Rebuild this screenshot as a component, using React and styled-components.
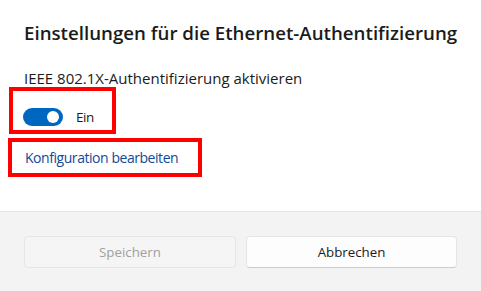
import React from 'react';
import styled, { createGlobalStyle } from 'styled-components';

const Global = createGlobalStyle`
  html, body { margin: 0; padding: 0; background: #ffffff; }
  body {
    font-family: "Open Sans", "Noto Sans", "DejaVu Sans", sans-serif;
    color: #1b1b1b;
    -webkit-font-smoothing: antialiased;
  }
`;

const Dialog = styled.div`
  width: 481px;
  height: 291px;
  display: flex;
  flex-direction: column;
  background: #ffffff;
  overflow: hidden;
`;

const Body = styled.div`
  flex: 1;
  display: flex;
  flex-direction: column;
  align-items: flex-start;
  padding: 19px 24px 0;
`;

const Title = styled.h1`
  margin: 0;
  font-size: 18.7px;
  font-weight: 600;
  line-height: 28px;
  color: #1b1b1b;
  white-space: nowrap;
`;

const Label = styled.div`
  margin-top: 21px;
  font-size: 15px;
  line-height: 20px;
  color: #1b1b1b;
  white-space: nowrap;
`;

const Highlight = styled.div`
  box-sizing: border-box;
  display: flex;
  align-items: center;
  border: 4px solid #ff0000;
  width: ${(p) => p.$w}px;
  height: ${(p) => p.$h}px;
  margin-left: ${(p) => p.$ml}px;
  margin-top: ${(p) => p.$mt}px;
  padding: ${(p) => p.$pad};
`;

const ToggleTrack = styled.div`
  position: relative;
  width: 40px;
  height: 18px;
  border-radius: 9px;
  background: #0067c0;
  flex: none;
`;

const ToggleKnob = styled.div`
  position: absolute;
  top: 3px;
  right: 4px;
  width: 12px;
  height: 12px;
  border-radius: 50%;
  background: #ffffff;
`;

const ToggleText = styled.span`
  margin-left: 13px;
  font-size: 13.5px;
  letter-spacing: -0.4px;
  line-height: 20px;
  color: #1b1b1b;
`;

const Link = styled.a`
  font-size: 14px;
  letter-spacing: -0.45px;
  line-height: 20px;
  color: #0e4a9a;
  text-decoration: none;
  white-space: nowrap;
  cursor: pointer;
`;

const Footer = styled.div`
  height: 80px;
  box-sizing: border-box;
  border-top: 1px solid #e5e5e5;
  background: #f3f3f3;
  padding: 24px 24px 0;
  display: grid;
  grid-template-columns: 212px 211px;
  column-gap: 10px;
  align-items: start;
`;

const Button = styled.button`
  box-sizing: border-box;
  height: 32px;
  border-radius: 4px;
  font-family: inherit;
  font-size: 13.3px;
  border: 1px solid #e5e5e5;
  border-bottom-color: ${(p) => (p.disabled ? '#e5e5e5' : '#cccccc')};
  background: ${(p) => (p.disabled ? '#f5f5f5' : '#fdfdfd')};
  color: ${(p) => (p.disabled ? '#a0a0a0' : '#1b1b1b')};
  padding: 0;
`;

export default function App() {
  return (
    <>
      <Global />
      <Dialog>
        <Body>
          <Title>Einstellungen für die Ethernet-Authentifizierung</Title>
          <Label>IEEE 802.1X-Authentifizierung aktivieren</Label>
          <Highlight $w={107} $h={47} $ml={-15} $mt={-1} $pad="12px 0 0 10px">
            <ToggleTrack>
              <ToggleKnob />
            </ToggleTrack>
            <ToggleText>Ein</ToggleText>
          </Highlight>
          <Highlight $w={194} $h={39} $ml={-16} $mt={4} $pad="0 0 0 13px">
            <Link>Konfiguration bearbeiten</Link>
          </Highlight>
        </Body>
        <Footer>
          <Button disabled>Speichern</Button>
          <Button>Abbrechen</Button>
        </Footer>
      </Dialog>
    </>
  );
}
